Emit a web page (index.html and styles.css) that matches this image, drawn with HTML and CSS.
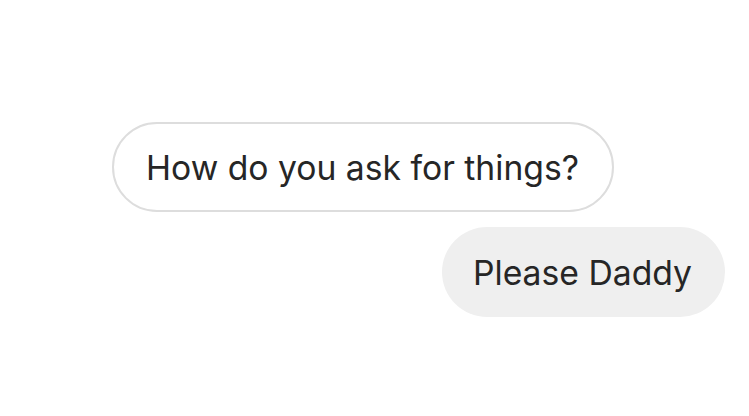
FILE: index.html
```html
<!DOCTYPE html>
<html>
<head>
<meta charset="utf-8">
<link rel="stylesheet" href="styles.css">
</head>
<body>
<div class="thread">
  <div class="msg msg-in">How do you ask for things?</div>
  <div class="msg msg-out">Please Daddy</div>
</div>
</body>
</html>
```
FILE: styles.css
```css
html, body {
  margin: 0;
  padding: 0;
  background: #ffffff;
}
.thread {
  display: flex;
  flex-direction: column;
  gap: 15px;
  padding: 122px 24px 0 112px;
  font-family: Inter, "Noto Sans", sans-serif;
}
.msg {
  box-sizing: border-box;
  height: 90px;
  border-radius: 45px;
  display: flex;
  align-items: center;
  font-size: 33.7px;
  color: #262626;
  white-space: nowrap;
}
.msg-in {
  align-self: flex-start;
  border: 2px solid #dddddd;
  padding: 0 33px 0 32px;
  background: #fff;
}
.msg-out {
  align-self: flex-end;
  background: #efefef;
  padding: 0 33px 0 31px;
}
```
